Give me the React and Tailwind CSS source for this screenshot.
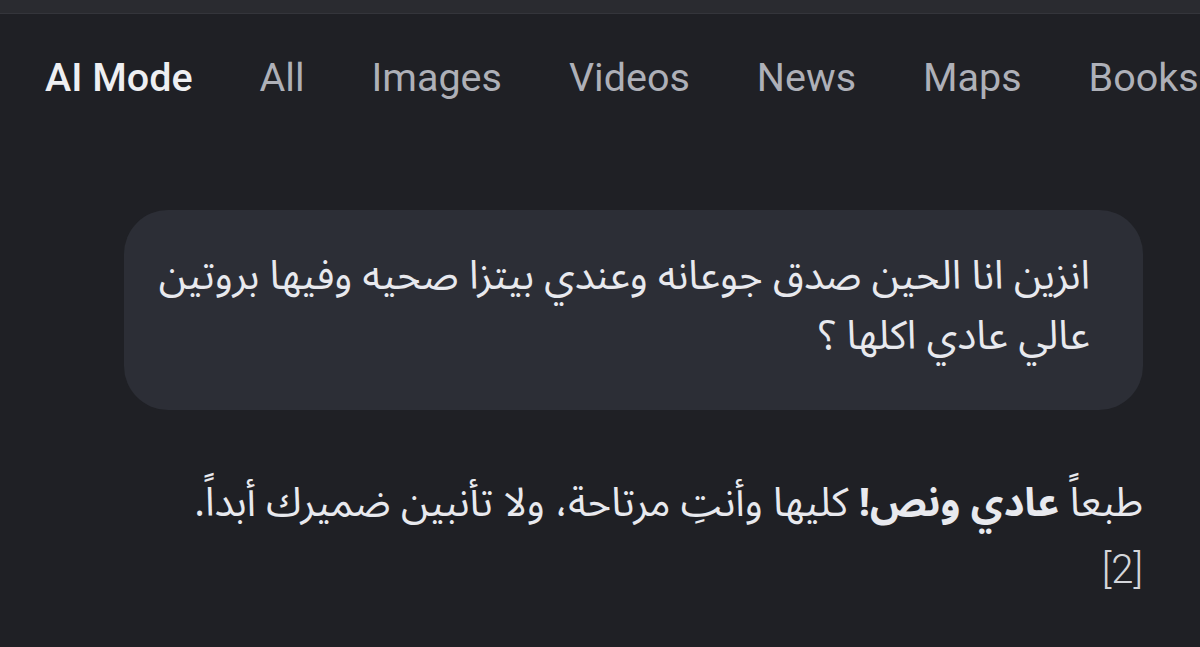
const TABS = ['AI Mode', 'All', 'Images', 'Videos', 'News', 'Maps', 'Books']

const arabicFont = { fontFamily: '"Noto Sans Arabic", "DejaVu Sans", sans-serif' }

export default function App() {
  return (
    <div className="w-[1200px] h-[647px] overflow-hidden bg-[#1f2025] flex flex-col">
      {/* status strip */}
      <div className="h-[14px] bg-[#2a2b30] border-b border-[#34353b]" />

      {/* tabs */}
      <nav className="flex items-center gap-[67px] pl-[45px] h-[128px] whitespace-nowrap font-['Roboto',sans-serif] text-[39.5px]">
        {TABS.map((tab, i) => (
          <span key={tab} className={i === 0 ? 'text-[#eeeff2] font-medium' : 'text-[#aeb0b8]'}>
            {tab}
          </span>
        ))}
      </nav>

      {/* question bubble */}
      <div className="flex justify-end pr-[57px] mt-[68px]">
        <div
          dir="rtl"
          className="w-[1019px] h-[200px] rounded-[44px] bg-[#2c2e36] pr-[53px] pl-[28px] pt-[37px] text-[40px] leading-[60px] text-[#e8e9ee]"
          style={arabicFont}
        >
          انزين انا الحين صدق جوعانه وعندي بيتزا صحيه وفيها بروتين عالي عادي اكلها ؟
        </div>
      </div>

      {/* answer */}
      <div
        dir="rtl"
        className="pr-[57px] pl-[30px] mt-[61px] text-[40px] leading-[66px] text-[#e8e9ee]"
        style={arabicFont}
      >
        طبعاً <span className="font-bold">عادي ونص!</span> كليها وأنتِ مرتاحة، ولا تأنبين ضميرك أبداً.
        <br />
        <span className="font-['Roboto',sans-serif] font-light text-[#d4d6db]">[2]</span>
      </div>
    </div>
  )
}
